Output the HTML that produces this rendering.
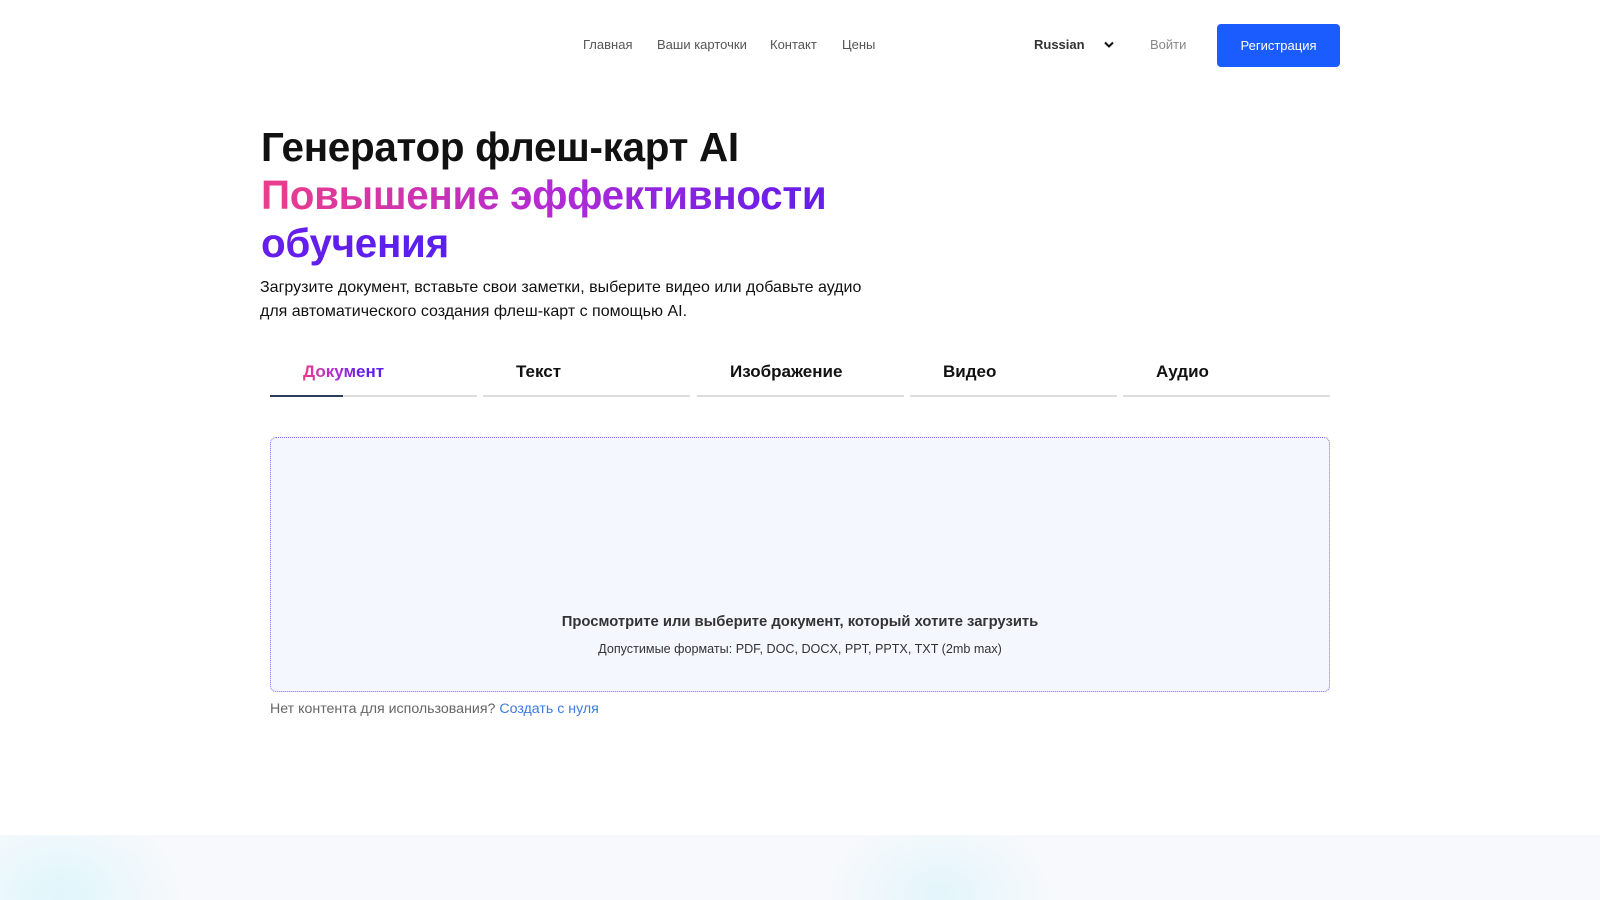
<!DOCTYPE html>
<html><head><meta charset="utf-8"><style>
*{margin:0;padding:0;box-sizing:border-box}
body{width:1600px;height:900px;overflow:hidden;background:#fff;font-family:"Liberation Sans",Arial,sans-serif;position:relative;color:#111}
.a{position:absolute;white-space:nowrap}
.nav{font-size:13px;color:#555;top:37px}
h1{position:absolute;left:261px;top:123px;font-size:40.4px;line-height:48px;font-weight:700;letter-spacing:-0.3px}
.g{background:linear-gradient(90deg,#ec3d8a 0%,#b02ad6 40%,#6a1ee8 70%,#5a1ff0 100%);-webkit-background-clip:text;background-clip:text;color:transparent}
p.d{position:absolute;left:260px;top:276px;font-size:16px;line-height:24px;color:#111}
.tab{position:absolute;top:362px;height:35px;width:207px;border-bottom:2px solid #ddd;font-size:17px;font-weight:700;text-align:left;padding-left:33px}
.drop{position:absolute;left:270px;top:437px;width:1060px;height:255px;background:#f4f7fe;border:1px dotted #7d6cf0;border-radius:6px}
.foot{position:absolute;left:0;top:835px;width:1600px;height:65px;background:radial-gradient(ellipse 120px 90px at 60px 60px,#dff6fb,transparent),radial-gradient(ellipse 110px 80px at 940px 60px,#e2f5fb,transparent),#f7f9fc}
</style></head><body>
<div class="a nav" style="left:583px">Главная</div>
<div class="a nav" style="left:657px">Ваши карточки</div>
<div class="a nav" style="left:770px">Контакт</div>
<div class="a nav" style="left:842px">Цены</div>
<div class="a" style="left:1034px;top:37px;font-size:13px;color:#333;font-weight:700;">Russian</div>
<svg class="a" style="left:1103px;top:40px" width="12" height="10" viewBox="0 0 12 10"><path d="M2 2.5l4 4 4-4" fill="none" stroke="#111" stroke-width="2"/></svg>
<div class="a nav" style="left:1150px;color:#888">Войти</div>
<div class="a" style="left:1217px;top:24px;width:123px;height:43px;background:#1a5cff;border-radius:4px;color:#fff;font-size:13px;line-height:43px;text-align:center">Регистрация</div>
<h1>Генератор флеш-карт AI<br><span class="g">Повышение эффективности<br>обучения</span></h1>
<p class="d">Загрузите документ, вставьте свои заметки, выберите видео или добавьте аудио<br>для автоматического создания флеш-карт с помощью AI.</p>
<div class="tab" style="left:270px"><span class="g">Документ</span><div style="position:absolute;left:0;bottom:-2px;width:73px;height:2px;background:#2c3e5c"></div></div>
<div class="tab" style="left:483px">Текст</div>
<div class="tab" style="left:697px">Изображение</div>
<div class="tab" style="left:910px">Видео</div>
<div class="tab" style="left:1123px">Аудио</div>
<div class="drop"></div>
<div class="a" style="left:270px;width:1060px;text-align:center;top:614px;font-size:14.8px;font-weight:700;color:#333">Просмотрите или выберите документ, который хотите загрузить</div>
<div class="a" style="left:270px;width:1060px;text-align:center;top:642px;font-size:12.6px;color:#333">Допустимые форматы: PDF, DOC, DOCX, PPT, PPTX, TXT (2mb max)</div>
<div class="a" style="left:270px;top:701px;font-size:14.2px;color:#666">Нет контента для использования? <span style="color:#3b7be0">Создать с нуля</span></div>
<div class="foot"></div>
</body></html>
